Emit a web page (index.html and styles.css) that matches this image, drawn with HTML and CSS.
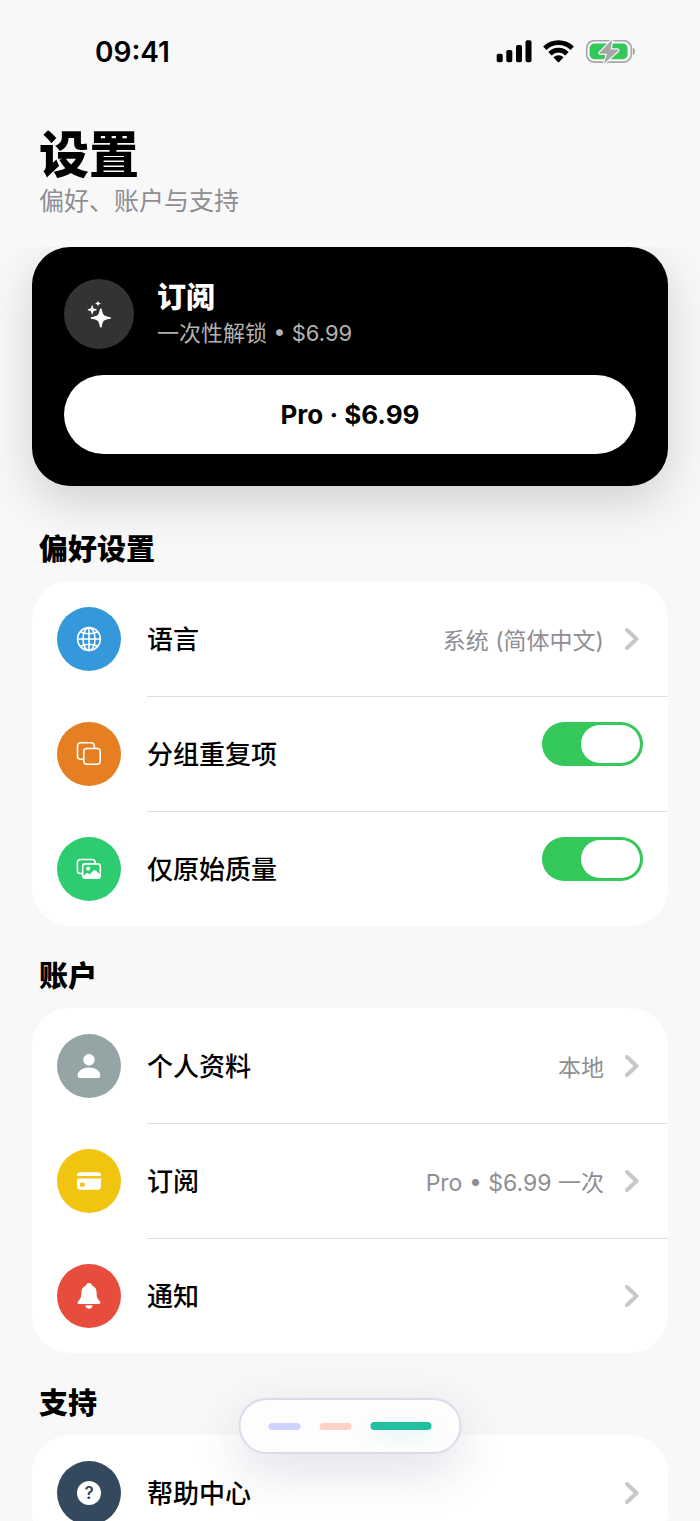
FILE: index.html
```html
<!DOCTYPE html>
<html lang="zh-CN">
<head>
<meta charset="utf-8">
<meta name="viewport" content="width=device-width, initial-scale=1">
<title>设置</title>
<link rel="stylesheet" href="styles.css">
</head>
<body>
<div class="app">
  <div class="status-bar">
    <time class="clock">09:41</time>
    <svg class="status-icons" viewBox="0 0 140 24" aria-hidden="true">
      <rect x="0.7" y="13.7" width="6" height="8.5" rx="1.8"/>
      <rect x="10.3" y="10" width="6" height="12.2" rx="1.8"/>
      <rect x="20" y="5" width="6" height="17.2" rx="1.8"/>
      <rect x="29.5" y="0.3" width="6" height="21.9" rx="1.8"/>
      <g fill="none" stroke="#000" stroke-width="4.8">
        <path d="M48.800 8.300a19.400 19.400 0 0 1 27.400 0"/>
        <path d="M54 13.700a12 12 0 0 1 17 0"/>
      </g>
      <path d="M57.400 17.300a7.300 7.300 0 0 1 10.200 0l-4.400 4.700a1 1 0 0 1-1.400 0z"/>
      <rect x="90.700" y="0.700" width="44.600" height="21.400" rx="7.500" fill="none" stroke="#a6a6a8" stroke-width="1.600"/>
      <path d="M136.900 7.800c2.800 1 2.800 6.200 0 7.200z" fill="#a6a6a8"/>
      <rect x="93.600" y="3.600" width="38" height="15.600" rx="4.800" fill="#34c759"/>
      <path d="M116.200-.5 103.800 12.400q-.8 1.400.8 1.400h6.500l-3 9.600L122 10.900q.7-1.400-.8-1.400h-6.600z" fill="#a6a6a8" stroke="#f8f8f8" stroke-width="2.400" paint-order="stroke"/>
    </svg>
  </div>

  <header class="page-header">
    <h1 class="page-title">设置</h1>
    <p class="page-subtitle">偏好、账户与支持</p>
  </header>

  <main class="content">
    <section class="promo">
      <div class="promo-head">
        <span class="promo-icon">
          <svg viewBox="0 0 26 28" aria-hidden="true">
            <path d="M14.800 8.500c.7 0 .9.500 1.100 1.600 1 5.100 2.100 6 7.100 6.800 1.300.2 1.900.4 1.900 1.100s-.6.900-1.900 1.100c-5 .8-6.100 1.700-7.100 6.800-.2 1.100-.4 1.600-1.100 1.600s-.9-.5-1.100-1.600c-1-5.100-2.100-6-7.100-6.800-1.300-.2-1.900-.4-1.900-1.100s.6-.9 1.900-1.100c5-.8 6.100-1.700 7.100-6.800.2-1.100.4-1.600 1.100-1.600z"/>
            <path d="M6.200 5.300c.5 0 .5.400.6.900.4 2.100.8 2.500 2.900 2.900.6.100 1 .2 1 .7s-.4.600-1 .7c-2.100.4-2.500.8-2.900 2.900-.1.500-.1.900-.6.900s-.5-.4-.6-.9c-.4-2.100-.8-2.500-2.900-2.900-.6-.1-1-.2-1-.7s.4-.6 1-.7c2.100-.4 2.500-.8 2.900-2.900.1-.500.1-.9.600-.9z"/>
            <path d="M12 .6c.4 1.900.9 2.500 3 3-2.100.5-2.600 1.100-3 3-.4-1.900-.9-2.500-3-3 2.100-.5 2.600-1.100 3-3z"/>
          </svg>
        </span>
        <div>
          <h2 class="promo-title">订阅</h2>
          <p class="promo-text">一次性解锁 • $6.99</p>
        </div>
      </div>
      <button class="promo-button" type="button">Pro · $6.99</button>
    </section>

    <section class="group">
      <h2 class="group-title">偏好设置</h2>
      <div class="card">
        <button class="row" type="button">
          <span class="row-icon blue">
            <svg viewBox="0 0 26 26" aria-hidden="true" class="line">
              <circle cx="13" cy="13" r="11.400"/>
              <ellipse cx="13" cy="13" rx="6" ry="11.400"/>
              <path d="M13 1.600v22.800M1.600 13h22.800M4.500 5.800c4.500 2.600 12.500 2.600 17 0M4.500 20.200c4.500-2.600 12.500-2.600 17 0"/>
            </svg>
          </span>
          <span class="row-body">
            <span class="row-label">语言</span>
            <span class="row-value">系统 (简体中文)</span>
            <svg class="chevron" viewBox="0 0 14 24" aria-hidden="true"><path d="M2 3l9.500 9L2 21"/></svg>
          </span>
        </button>
        <label class="row">
          <span class="row-icon orange">
            <svg viewBox="0 0 26 26" aria-hidden="true" class="line">
              <path d="M7.800 18.200H4.500a3 3 0 0 1-3-3V4.700a3 3 0 0 1 3-3h10.800a3 3 0 0 1 3 3v2.800"/>
              <rect x="7.800" y="7.500" width="16.400" height="15.700" rx="3"/>
            </svg>
          </span>
          <span class="row-body">
            <span class="row-label">分组重复项</span>
            <input class="switch" type="checkbox" role="switch" checked>
          </span>
        </label>
        <label class="row">
          <span class="row-icon green">
            <svg viewBox="0 0 26 26" aria-hidden="true">
              <path class="line" d="M6.300 17.500H4.400a3 3 0 0 1-3-3v-8a3 3 0 0 1 3-3h11.800a3 3 0 0 1 3 3v1"/>
              <rect class="line" x="6.700" y="7.900" width="17.600" height="14.200" rx="2.600"/>
              <circle cx="12.200" cy="12.600" r="2.100"/>
              <path d="M7 20.200l3.500-2.900q.9-.7 1.800 0l1.300 1.100 4-3.800q1.100-.9 2.200 0l4.200 3.800v1.800q0 1.900-2 1.900H9q-2 0-2-1.900z"/>
            </svg>
          </span>
          <span class="row-body">
            <span class="row-label">仅原始质量</span>
            <input class="switch" type="checkbox" role="switch" checked>
          </span>
        </label>
      </div>
    </section>

    <section class="group">
      <h2 class="group-title">账户</h2>
      <div class="card">
        <button class="row" type="button">
          <span class="row-icon gray">
            <svg viewBox="0 0 26 26" aria-hidden="true">
              <circle cx="13" cy="6.700" r="5.700"/>
              <path d="M1.600 22.800C1.600 17.500 7 14.400 13 14.400s11.400 3.100 11.400 8.400q0 2.200-2.200 2.200H3.800q-2.200 0-2.200-2.200z"/>
            </svg>
          </span>
          <span class="row-body">
            <span class="row-label">个人资料</span>
            <span class="row-value">本地</span>
            <svg class="chevron" viewBox="0 0 14 24" aria-hidden="true"><path d="M2 3l9.500 9L2 21"/></svg>
          </span>
        </button>
        <button class="row" type="button">
          <span class="row-icon yellow">
            <svg viewBox="0 0 26 26" aria-hidden="true">
              <path d="M1 8V7q0-2.800 2.800-2.800h18.400Q25 4.200 25 7v1z"/>
              <path fill-rule="evenodd" d="M1 10.500h24v8.300q0 3-3 3H4q-3 0-3-3zM5 14.800q-1 0-1 1v1.900q0 1 1 1h2.700q1 0 1-1v-1.900q0-1-1-1z"/>
            </svg>
          </span>
          <span class="row-body">
            <span class="row-label">订阅</span>
            <span class="row-value">Pro • $6.99 一次</span>
            <svg class="chevron" viewBox="0 0 14 24" aria-hidden="true"><path d="M2 3l9.500 9L2 21"/></svg>
          </span>
        </button>
        <button class="row" type="button">
          <span class="row-icon red">
            <svg viewBox="0 0 26 26" aria-hidden="true">
              <path d="M13 0c-1.700 0-2.800 1-3.100 2.400C6.700 3.700 5.500 6.200 5.400 9.300c-.1 4.900-.6 6.200-2.900 8.500-1.600 1.500-1.100 3.200.5 3.200h20c1.600 0 2.100-1.700.5-3.200-2.300-2.300-2.800-3.600-2.900-8.500-.1-3.100-1.300-5.600-4.500-6.900C15.800 1 14.700 0 13 0z"/>
              <path d="M9.400 22.300h7.200c-.2 2.200-1.700 3.500-3.600 3.500s-3.400-1.300-3.600-3.500z"/>
            </svg>
          </span>
          <span class="row-body">
            <span class="row-label">通知</span>
            <svg class="chevron" viewBox="0 0 14 24" aria-hidden="true"><path d="M2 3l9.500 9L2 21"/></svg>
          </span>
        </button>
      </div>
    </section>

    <section class="group">
      <h2 class="group-title">支持</h2>
      <div class="card">
        <button class="row" type="button">
          <span class="row-icon navy"><span class="help-mark">?</span></span>
          <span class="row-body">
            <span class="row-label">帮助中心</span>
            <svg class="chevron" viewBox="0 0 14 24" aria-hidden="true"><path d="M2 3l9.500 9L2 21"/></svg>
          </span>
        </button>
      </div>
    </section>
  </main>

  <nav class="tabs" aria-label="页面">
    <button class="tab violet" type="button" aria-label="第一页"></button>
    <button class="tab coral" type="button" aria-label="第二页"></button>
    <button class="tab active" type="button" aria-label="设置" aria-current="page"></button>
  </nav>
</div>
</body>
</html>
```
FILE: styles.css
```css
* {
  box-sizing: border-box;
}

body,
h1,
h2,
p {
  margin: 0;
}

body {
  background: #f8f8f8;
  color: #000;
  font-family: Inter, "Noto Sans CJK SC", sans-serif;
}

button {
  margin: 0;
  border: 0;
  background: none;
  color: inherit;
  font: inherit;
  cursor: pointer;
}

.app {
  display: flex;
  flex-direction: column;
  height: 100vh;
  overflow: hidden;
}

.status-bar {
  display: flex;
  align-items: center;
  justify-content: space-between;
  padding: 34px 64px 0 95px;
}

.clock {
  font-size: 28px;
  font-weight: 600;
  line-height: 36px;
}

.status-icons {
  width: 140px;
  height: 24px;
}

.page-header {
  padding: 55px 39px 30px;
}

.page-title {
  font-size: 50px;
  font-weight: 900;
  line-height: 60px;
}

.page-subtitle {
  padding-top: 1px;
  color: #8e8e93;
  font-size: 25px;
  line-height: 31px;
}

.content {
  flex: 1;
  min-height: 0;
  padding: 0 32px;
  overflow-y: auto;
  scrollbar-width: none;
}

.promo {
  margin-bottom: 46px;
  padding: 32px;
  border-radius: 38px;
  background: #000;
  color: #fff;
  box-shadow: 0 16px 48px rgba(0, 0, 0, 0.16);
}

.promo-head {
  display: flex;
  align-items: center;
  gap: 23px;
  margin-bottom: 26px;
}

.promo-icon {
  display: grid;
  place-items: center;
  width: 70px;
  height: 70px;
  border-radius: 50%;
  background: #333;
}

.promo-icon svg {
  width: 26px;
  height: 28px;
  fill: #fff;
}

.promo-title {
  font-size: 29px;
  font-weight: 800;
  line-height: 38px;
}

.promo-text {
  color: #b3b3b3;
  font-size: 22px;
  line-height: 32px;
}

.promo-button {
  width: 100%;
  padding: 20px;
  border-radius: 40px;
  background: #fff;
  color: #000;
  font-size: 26px;
  font-weight: 700;
  line-height: 39px;
}

.group {
  margin-bottom: 33px;
}

.group-title {
  margin-bottom: 13px;
  padding-left: 7px;
  font-size: 29px;
  font-weight: 800;
  line-height: 36px;
}

.card {
  overflow: hidden;
  border-radius: 38px;
  background: #fff;
}

.row {
  display: flex;
  gap: 26px;
  width: 100%;
  padding: 0 0 0 25px;
  text-align: left;
  cursor: pointer;
}

.row-icon {
  display: grid;
  flex: none;
  place-items: center;
  width: 64px;
  height: 64px;
  margin: 26px 0 25px;
  border-radius: 50%;
}

.row-icon svg {
  width: 26px;
  height: 26px;
  fill: #fff;
}

.row-icon .line {
  fill: none;
  stroke: #fff;
  stroke-width: 1.6px;
}

.blue { background: #3498db; }
.orange { background: #e67e22; }
.green { background: #2ecc71; }
.gray { background: #95a5a6; }
.yellow { background: #f1c40f; }
.red { background: #e74c3c; }
.navy { background: #34495e; }

.help-mark {
  width: 24px;
  height: 24px;
  border-radius: 50%;
  background: #fff;
  color: #34495e;
  font-size: 17px;
  font-weight: 600;
  line-height: 24px;
  text-align: center;
}

.row-body {
  display: flex;
  flex: 1;
  align-items: center;
  padding-right: 29px;
  border-top: 1px solid #e0e0e2;
}

.row:first-child .row-body {
  border-top-color: transparent;
}

.row-label {
  flex: 1;
  padding-bottom: 3px;
  font-size: 26px;
  font-weight: 500;
}

.row-value {
  padding-bottom: 1px;
  color: #8e8e93;
  font-size: 23px;
}

.chevron {
  width: 14px;
  height: 24px;
  margin-left: 21px;
  fill: none;
  stroke: #c7c7cc;
  stroke-width: 4px;
  stroke-linecap: round;
  stroke-linejoin: round;
}

.row-body:has(.switch) {
  padding-right: 25px;
}

.switch {
  display: flex;
  align-self: flex-start;
  justify-content: flex-end;
  width: 101px;
  height: 44px;
  margin: 25px 0 0;
  padding: 3px;
  border-radius: 22px;
  background: #d1d1d6;
  appearance: none;
  cursor: pointer;
}

.switch::before {
  width: 59px;
  border-radius: 19px;
  background: #fff;
  content: "";
}

.switch:not(:checked) {
  justify-content: flex-start;
}

.switch:checked {
  background: #34c759;
}

.tabs {
  position: fixed;
  bottom: 67px;
  left: 50%;
  display: flex;
  align-items: center;
  gap: 19px;
  padding: 22px 28px;
  border: 2px solid #dadcea;
  border-radius: 28px;
  background: #fdfdfe;
  box-shadow: 0 16px 50px rgba(60, 60, 110, 0.16);
  transform: translateX(-50%);
}

.tab {
  width: 32px;
  height: 7px;
  padding: 0;
  border-radius: 4px;
}

.violet { background: #ced4ff; }
.coral { background: #ffd0c6; }

.tab.active {
  width: 61px;
  height: 8px;
  background: #22bfa0;
  box-shadow: 0 6px 16px rgba(34, 191, 160, 0.15);
}
```
